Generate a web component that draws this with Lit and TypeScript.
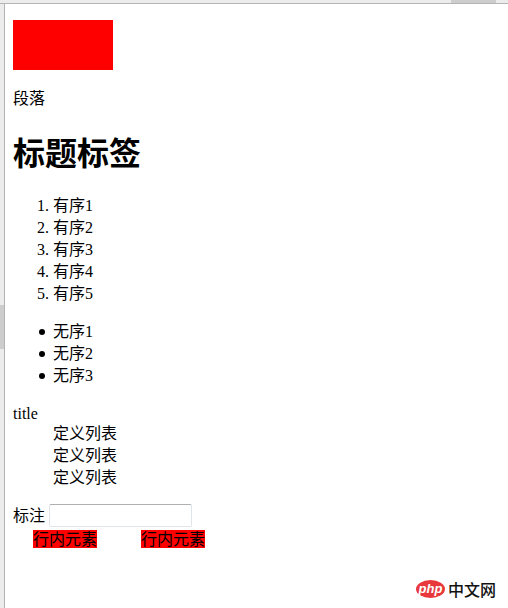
import { LitElement, html, css } from "lit";
import { customElement } from "lit/decorators.js";

@customElement("app-root")
export class AppRoot extends LitElement {
  static styles = css`
    :host {
      display: block;
      position: relative;
      width: 508px;
      height: 608px;
      overflow: hidden;
      background: #fff;
      color: #000;
      font: 16px/22px "Liberation Serif", "Noto Sans CJK SC", serif;
    }
    .top {
      height: 3px;
      background: #ececec;
      border-bottom: 1px solid #b4b4b4;
      display: flex;
      justify-content: flex-end;
      padding-right: 12px;
    }
    .tab { width: 45px; background: #cdcdcd; }
    .main { display: flex; height: 604px; }
    .rail {
      width: 4px;
      background: #ececec;
      border-right: 1px solid #b4b4b4;
      padding-top: 301px;
      box-sizing: content-box;
    }
    .thumb { height: 44px; background: #cdcdcd; }
    .page { flex: 1; padding: 16px 8px 0; min-width: 0; }
    .box { width: 100px; height: 50px; background: #f00; }
    p { margin: 18px 0 0; }
    h1 { font-size: 32px; line-height: 44px; font-weight: 700; margin: 22px 0 19px; }
    ol, ul { margin: 16px 0; padding-left: 40px; }
    ol { margin-top: 0; }
    ul { list-style: none; }
    ul li { position: relative; }
    ul li::before {
      content: "";
      position: absolute;
      left: -14px;
      top: 8px;
      width: 6px;
      height: 6px;
      border-radius: 50%;
      background: #000;
    }
    dl { margin: 18px 0 14px; }
    dt { line-height: 18px; }
    dd { margin-left: 40px; }
    .field { height: 26px; display: flex; align-items: flex-start; gap: 4px; }
    .label { padding-top: 2px; }
    input {
      width: 143px;
      height: 23px;
      box-sizing: border-box;
      margin: 1px 0 0;
      padding: 0;
      background: #fff;
      border: 1px solid #dfe5e8;
      border-top-color: #b0b0b0;
      border-radius: 2px;
    }
    .inl { background: #f00; margin: 0 20px; padding-top: 1px; }
    .logo {
      position: absolute;
      left: 416px;
      top: 579px;
      display: flex;
      align-items: center;
      gap: 3px;
    }
    .badge {
      width: 29px;
      height: 18px;
      border-radius: 50%;
      background: #e8383c;
      color: #fff;
      font: italic 700 13px/17px "Liberation Sans", sans-serif;
      text-align: center;
    }
    .cn { font: 500 16px/20px "Noto Sans CJK SC", sans-serif; color: #111; }
  `;

  render() {
    return html`
      <div class="top"><div class="tab"></div></div>
      <div class="main">
        <div class="rail"><div class="thumb"></div></div>
        <div class="page">
          <div class="box"></div>
          <p>段落</p>
          <h1>标题标签</h1>
          <ol>${[1, 2, 3, 4, 5].map((n) => html`<li>有序${n}</li>`)}</ol>
          <ul>${[1, 2, 3].map((n) => html`<li>无序${n}</li>`)}</ul>
          <dl>
            <dt>title</dt>
            <dd>定义列表</dd>
            <dd>定义列表</dd>
            <dd>定义列表</dd>
          </dl>
          <div class="field"><span class="label">标注</span><input type="text" /></div>
          <div><span class="inl">行内元素</span> <span class="inl">行内元素</span></div>
        </div>
      </div>
      <div class="logo"><span class="badge">php</span><span class="cn">中文网</span></div>
    `;
  }
}
